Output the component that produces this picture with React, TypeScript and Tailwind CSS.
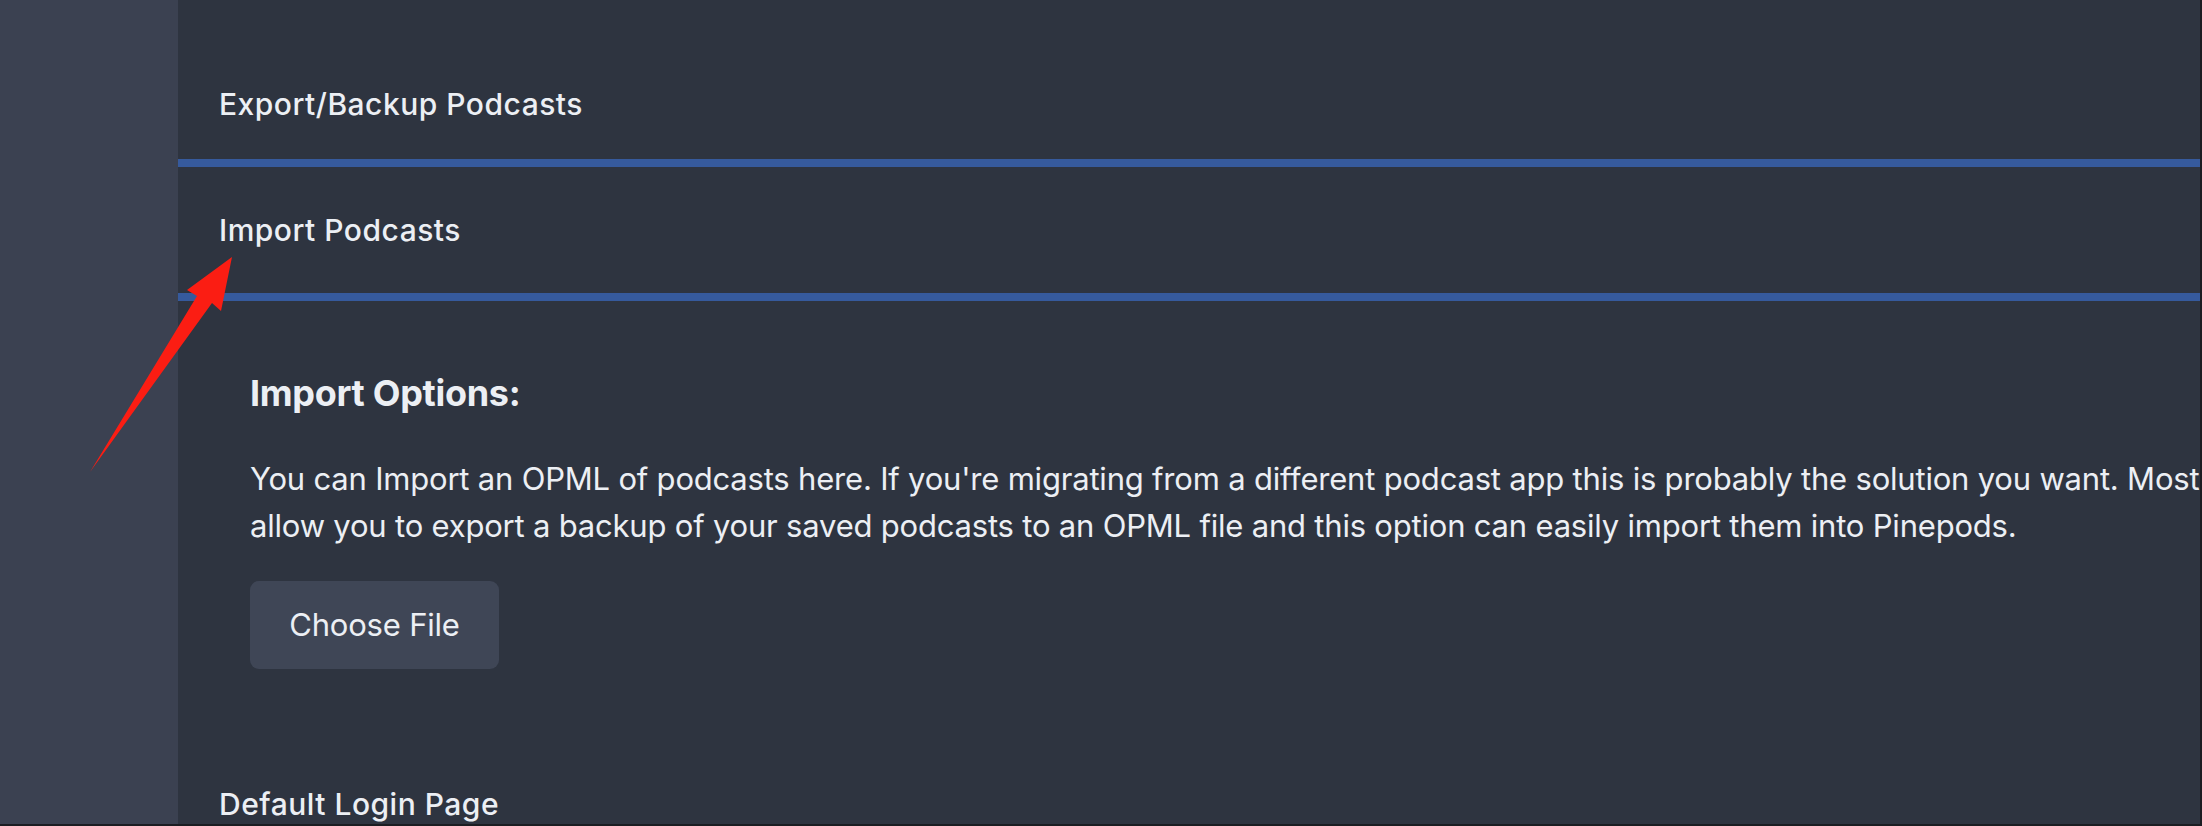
import React from "react";

function RedArrow() {
  return (
    <svg
      className="absolute left-0 top-0 pointer-events-none"
      width="300"
      height="500"
      viewBox="0 0 300 500"
    >
      <polygon
        points="232,257 187,290 197,296 90,472 212,303 221,311"
        fill="#fb1d13"
      />
    </svg>
  );
}

export default function App() {
  return (
    <div
      className="relative flex w-[2202px] h-[826px] overflow-hidden bg-[#2e3440] text-[#eceff4] border-b-2 border-[#1b1d22]"
      style={{ fontFamily: "Inter, 'Noto Sans', sans-serif" }}
    >
      {/* sidebar */}
      <aside className="w-[178px] shrink-0 bg-[#3b4151]" />

      {/* settings column */}
      <main className="flex-1 flex flex-col border-r-2 border-[#1b1d22]">
        <div className="h-[160px] pt-[50px] pl-[41px] flex items-center">
          <h3 className="text-[30px] leading-[40px] font-medium tracking-[0.5px]">
            Export/Backup Podcasts
          </h3>
        </div>
        <div className="h-[144px] border-t-8 border-b-8 border-[#365a9d] pl-[41px] flex items-center">
          <h3 className="text-[30px] leading-[40px] font-medium tracking-[0.5px]">
            Import Podcasts
          </h3>
        </div>

        <section className="pl-[72px] pt-[70px]">
          <h2 className="text-[36px] leading-[44px] font-bold tracking-[-0.3px]">
            Import Options:
          </h2>
          <p className="mt-[40px] text-[31px] leading-[47px] whitespace-nowrap tracking-[-0.2px]">
            <span className="block">
              You can Import an OPML of podcasts here. If you're migrating from a different podcast app this is probably the solution you want. Most
            </span>
            <span className="block">
              allow you to export a backup of your saved podcasts to an OPML file and this option can easily import them into Pinepods.
            </span>
          </p>
          <button className="mt-[32px] w-[249px] h-[88px] rounded-[9px] bg-[#3f4656] text-[31px] tracking-[-0.2px] text-[#eceff4]">
            Choose File
          </button>
        </section>

        <div className="mt-[115px] pl-[41px]">
          <h3 className="text-[30px] leading-[40px] font-medium tracking-[0.5px]">
            Default Login Page
          </h3>
        </div>
      </main>

      <RedArrow />
    </div>
  );
}
